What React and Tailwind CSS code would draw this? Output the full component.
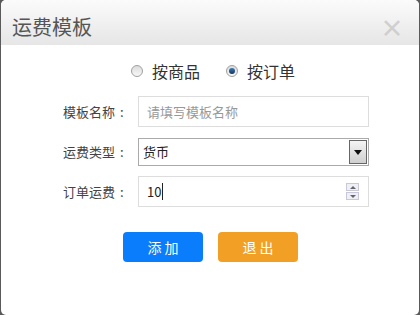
import { useState } from 'react'

const font = { fontFamily: '"Microsoft YaHei", "Noto Sans CJK SC", sans-serif' }

export default function App() {
  const [mode, setMode] = useState('order')

  return (
    <div className="w-[420px] h-[315px] bg-[#5a5a5a] px-px overflow-hidden" style={font}>
      <div className="h-full bg-white rounded-[5px] flex flex-col">
        {/* Header */}
        <div className="h-[45px] flex items-center justify-between pl-[11px] pr-[15px] bg-gradient-to-b from-[#fbfbfb] to-[#e6e6e6] rounded-t-[5px]">
          <h1 className="text-[20px] text-[#555] leading-none pt-[8px]">运费模板</h1>
          <span className="text-[24px] font-bold text-[#cfcfcf] leading-none pt-[8px]">×</span>
        </div>

        {/* Radios */}
        <div className="flex justify-center gap-[26px] pt-[14px] text-[16px] text-[#333] pl-[6px]">
          <Radio label="按商品" checked={mode === 'goods'} onClick={() => setMode('goods')} />
          <Radio label="按订单" checked={mode === 'order'} onClick={() => setMode('order')} />
        </div>

        {/* Form */}
        <div className="flex flex-col pt-[13px] pl-[62px] text-[13px] text-[#444]">
          <Row label="模板名称">
            <div className="w-[231px] h-[31px] border border-[#ddd] flex items-center px-[8px] text-[#999]">
              请填写模板名称
            </div>
          </Row>
          <Row label="运费类型" mt="mt-[11px]">
            <div className="w-[231px] h-[28px] border border-[#aaa] flex items-center justify-between pl-[4px] pr-[1px] text-[#222]">
              <span>货币</span>
              <span className="w-[18px] h-[24px] border border-[#666] bg-gradient-to-b from-[#f4f4f4] to-[#d0d0d0] flex items-center justify-center">
                <svg width="8" height="5" viewBox="0 0 8 5"><path d="M0 0h8L4 5z" fill="#111" /></svg>
              </span>
            </div>
          </Row>
          <Row label="订单运费" mt="mt-[10px]">
            <div className="w-[231px] h-[31px] border border-[#ddd] flex items-center justify-between pl-[8px] pr-[9px] text-[#222]">
              <span className="flex items-center">10<span className="w-px h-[17px] bg-[#222] ml-[1px]" /></span>
              <span className="flex flex-col gap-px">
                <span className="w-[13px] h-[8px] border border-[#c8c8d8] bg-[#eef0f6] flex items-center justify-center">
                  <svg width="6" height="3" viewBox="0 0 6 3"><path d="M0 3h6L3 0z" fill="#666" /></svg>
                </span>
                <span className="w-[13px] h-[8px] border border-[#c8c8d8] bg-[#eef0f6] flex items-center justify-center">
                  <svg width="6" height="3" viewBox="0 0 6 3"><path d="M0 0h6L3 3z" fill="#666" /></svg>
                </span>
              </span>
            </div>
          </Row>
        </div>

        {/* Buttons */}
        <div className="flex justify-center gap-[15px] pt-[25px] pl-[1px]">
          <button className="w-[80px] h-[30px] rounded-[4px] bg-[#0a7dfd] text-white text-[14px] tracking-[3px] pl-[3px]">添加</button>
          <button className="w-[80px] h-[30px] rounded-[4px] bg-[#f1a025] text-white text-[14px] tracking-[3px] pl-[3px]">退出</button>
        </div>
      </div>
    </div>
  )
}

function Radio({ label, checked, onClick }) {
  return (
    <label className="flex items-center gap-[9px] cursor-pointer" onClick={onClick}>
      <span className="w-[12px] h-[12px] rounded-full border border-[#a0a0a0] bg-gradient-to-b from-[#dcdcdc] to-[#f8f8f8] flex items-center justify-center">
        {checked && <span className="w-[6px] h-[6px] rounded-full bg-gradient-to-b from-[#3a7ab8] to-[#16375e]" />}
      </span>
      <span>{label}</span>
    </label>
  )
}

function Row({ label, children, mt = '' }) {
  return (
    <div className={`flex items-center ${mt}`}>
      <span className="w-[75px] whitespace-nowrap">
        {label}
        <span className="ml-[5px]">:</span>
      </span>
      {children}
    </div>
  )
}
